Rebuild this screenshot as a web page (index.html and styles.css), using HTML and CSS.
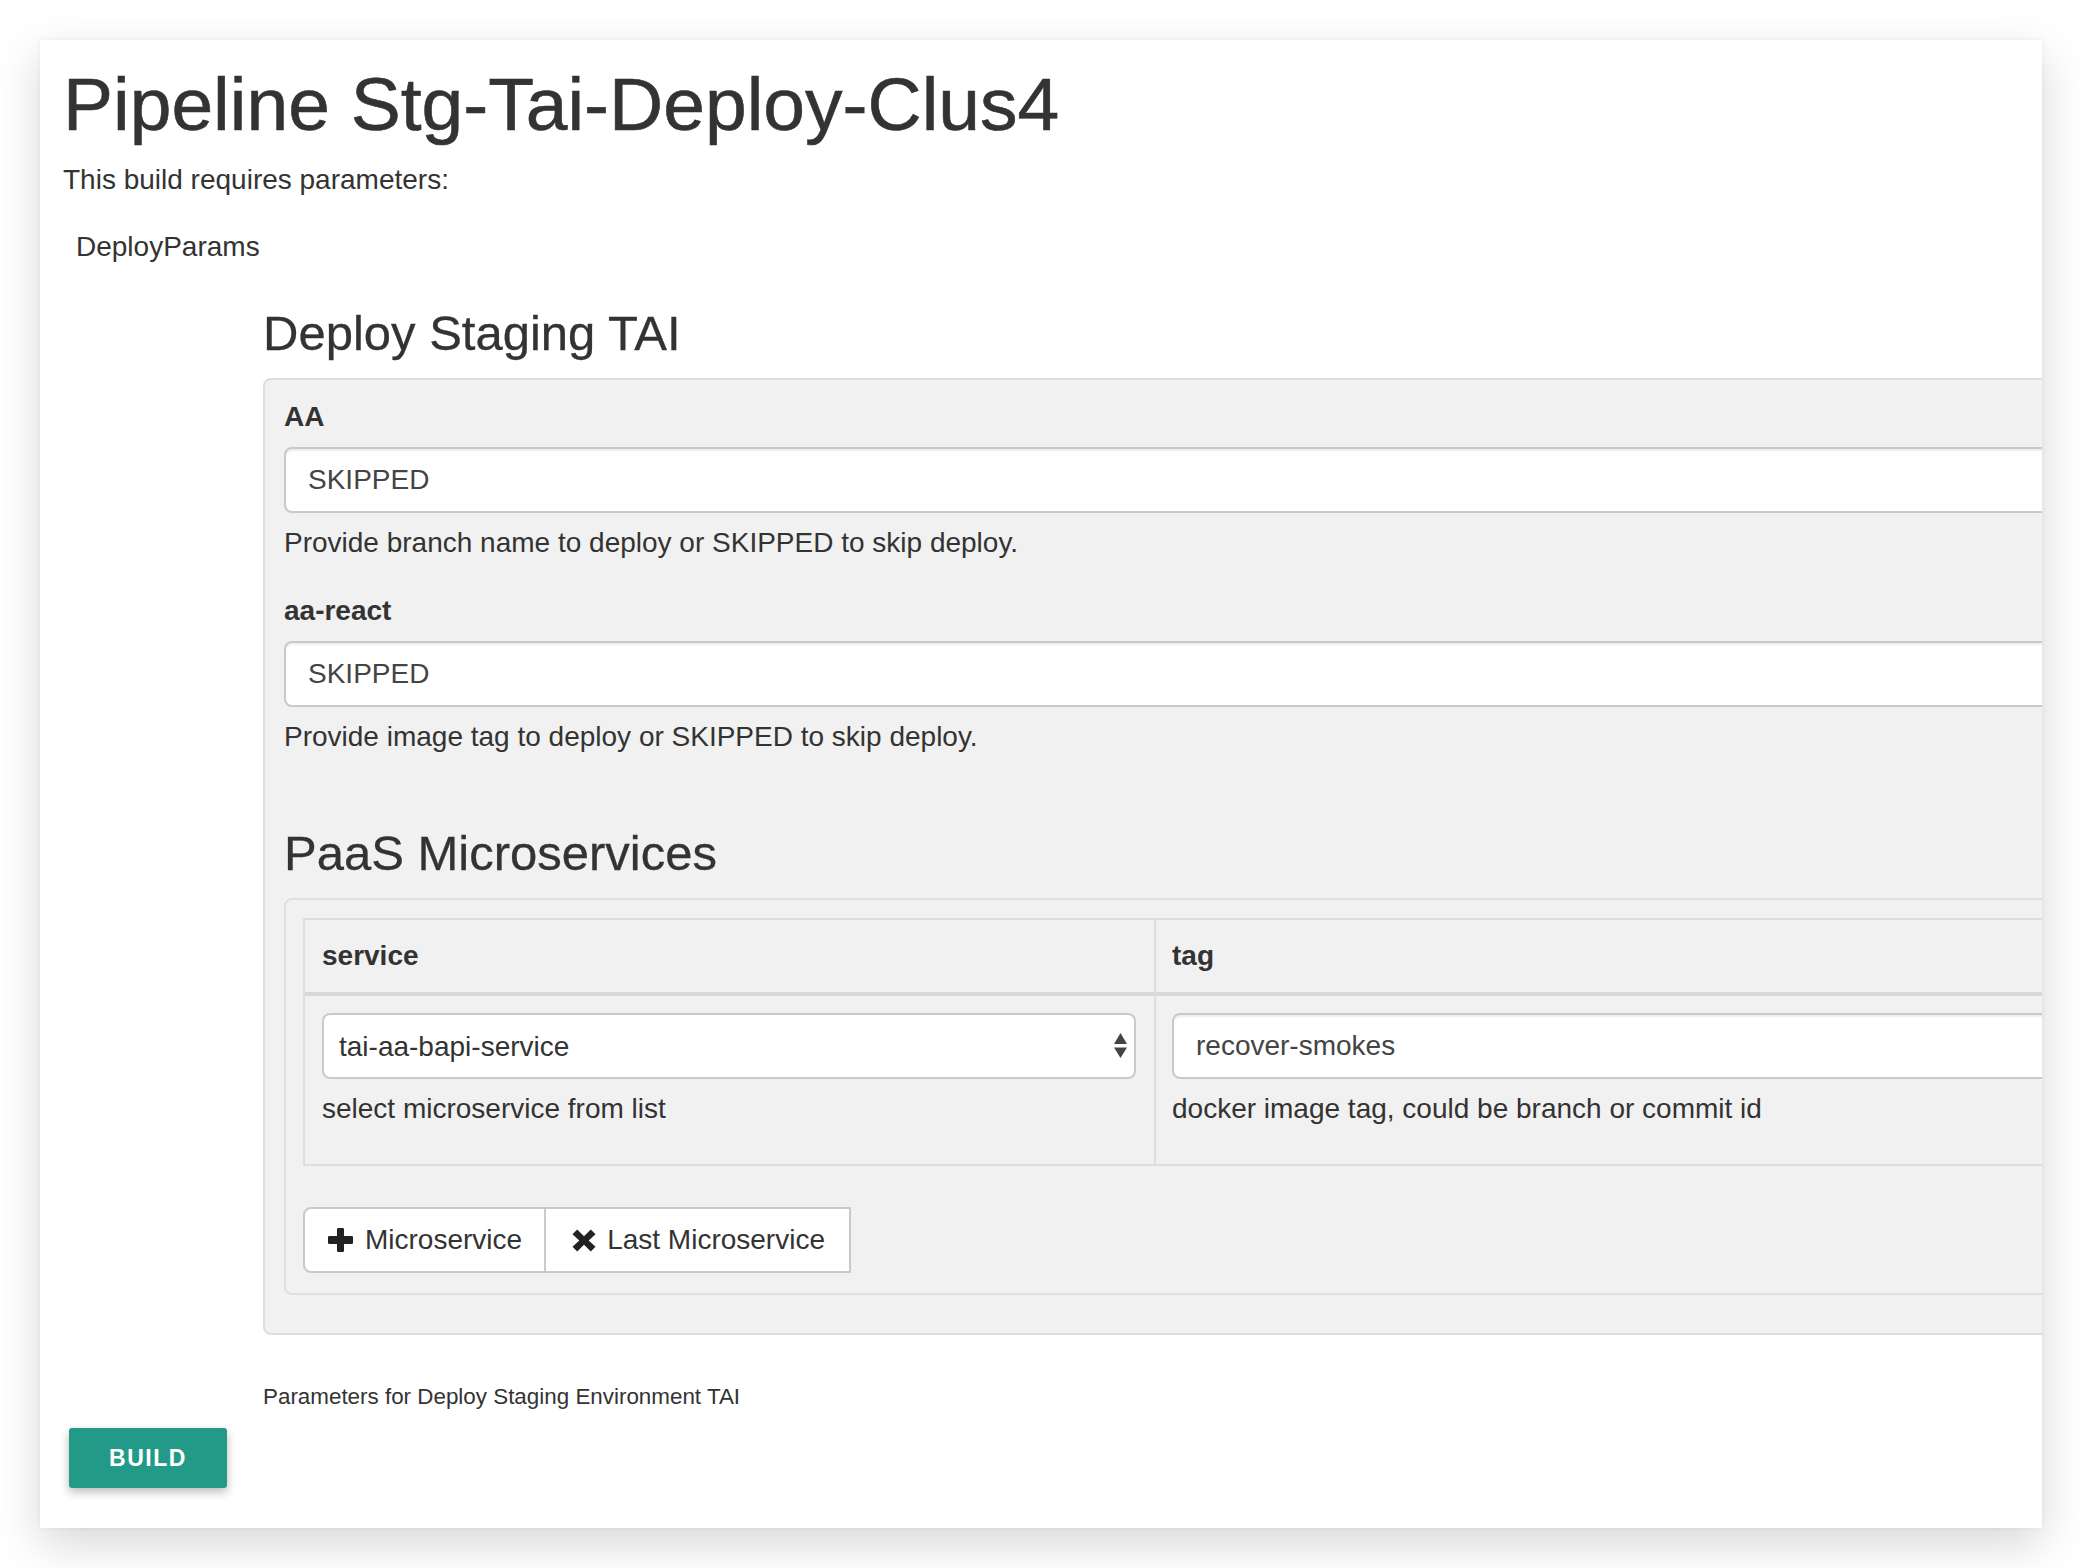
FILE: index.html
```html
<!DOCTYPE html>
<html lang="en">
<head>
<meta charset="utf-8">
<title>Pipeline Stg-Tai-Deploy-Clus4</title>
<link rel="stylesheet" href="styles.css">
</head>
<body>
<div class="window">
  <h1 class="title">Pipeline Stg-Tai-Deploy-Clus4</h1>
  <p class="intro">This build requires parameters:</p>

  <div class="param">
    <div class="param-name">DeployParams</div>
    <div class="param-main">
      <h2 class="section-title">Deploy Staging TAI</h2>
      <div class="well">
        <div class="field">
          <label class="field-label">AA</label>
          <input class="text-input" type="text" value="SKIPPED">
          <div class="help">Provide branch name to deploy or SKIPPED to skip deploy.</div>
        </div>
        <div class="field">
          <label class="field-label">aa-react</label>
          <input class="text-input" type="text" value="SKIPPED">
          <div class="help">Provide image tag to deploy or SKIPPED to skip deploy.</div>
        </div>

        <h3 class="section-title sub-title">PaaS Microservices</h3>
        <div class="inner-well">
          <div class="ms-table">
            <div class="th">service</div>
            <div class="th col2">tag</div>
            <div class="td">
              <div class="select-wrap">
                <select class="select-input">
                  <option>tai-aa-bapi-service</option>
                </select>
                <svg class="select-arrows" width="13" height="25" viewBox="0 0 13 25" aria-hidden="true">
                  <path d="M6.5 0L13 11H0z" fill="#444"/>
                  <path d="M0 14.5h13L6.5 25z" fill="#444"/>
                </svg>
              </div>
              <div class="help">select microservice from list</div>
            </div>
            <div class="td col2">
              <input class="text-input" type="text" value="recover-smokes">
              <div class="help">docker image tag, could be branch or commit id</div>
            </div>
          </div>

          <div class="btn-group">
            <button class="btn btn-first" type="button">
              <svg width="25" height="24" viewBox="0 0 25 24" aria-hidden="true">
                <path d="M9 1.2Q9 0 10.2 0h4.6Q16 0 16 1.2V8h7.8Q25 8 25 9.2v5.6Q25 16 23.8 16H16v6.8Q16 24 14.8 24h-4.6Q9 24 9 22.8V16H1.2Q0 16 0 14.8V9.2Q0 8 1.2 8H9z" fill="#222"/>
              </svg>
              <span>Microservice</span>
            </button>
            <button class="btn btn-last" type="button">
              <svg width="24" height="23" viewBox="0 0 24 23" aria-hidden="true">
                <path d="M5.2 0.5L12 7.3L18.8 0.5L23.5 5.2L16.7 11.5L23.5 17.8L18.8 22.5L12 15.7L5.2 22.5L0.5 17.8L7.3 11.5L0.5 5.2z" fill="#222"/>
              </svg>
              <span>Last Microservice</span>
            </button>
          </div>
        </div>
      </div>
    </div>
  </div>

  <div class="param-desc">Parameters for Deploy Staging Environment TAI</div>
  <button class="build" type="button">BUILD</button>
</div>
</body>
</html>
```

FILE: styles.css
```css
* {
  box-sizing: border-box;
}

html,
body {
  margin: 0;
  background: #ffffff;
}

body {
  font-family: "Liberation Sans", Arial, Helvetica, sans-serif;
  color: #333333;
}

.window {
  margin: 40px;
  width: 2002px;
  height: 1488px;
  background: #ffffff;
  overflow: hidden;
  padding: 24px 0 0 23px;
  box-shadow: 0 16px 44px rgba(0, 0, 0, 0.16), 0 0 6px rgba(0, 0, 0, 0.05);
}

.title {
  margin: 0;
  font-size: 75px;
  line-height: 80px;
  font-weight: 400;
  white-space: nowrap;
  -webkit-text-stroke: 0.6px #333333;
}

.intro {
  margin: 16px 0 0;
  font-size: 28px;
  line-height: 40px;
}

.param {
  display: grid;
  grid-template-columns: 200px 1900px;
  margin-top: 27px;
}

.param-name {
  padding-left: 13px;
  font-size: 28px;
  line-height: 40px;
}

.param-main {
  padding-top: 79px;
}

.section-title {
  margin: 0;
  font-size: 49px;
  line-height: 54px;
  font-weight: 400;
  white-space: nowrap;
  -webkit-text-stroke: 0.3px #333333;
}

.well {
  margin-top: 18px;
  background: #f1f1f1;
  border: 2px solid #dddddd;
  border-radius: 8px;
  padding: 17px 19px 38px;
}

.field + .field {
  margin-top: 28px;
}

.field-label {
  display: block;
  margin-bottom: 10px;
  font-size: 28px;
  line-height: 40px;
  font-weight: 700;
}

.text-input {
  display: block;
  width: 100%;
  height: 66px;
  margin: 0;
  padding: 0 22px;
  border: 2px solid #c9c9c9;
  border-radius: 8px;
  background: #ffffff;
  box-shadow: inset 0 2px 2px rgba(0, 0, 0, 0.07);
  font-family: "Liberation Sans", Arial, Helvetica, sans-serif;
  font-size: 28px;
  color: #444444;
  outline: none;
}

.help {
  margin-top: 10px;
  font-size: 28px;
  line-height: 40px;
  white-space: nowrap;
}

.sub-title {
  margin-top: 69px;
}

.inner-well {
  margin-top: 18px;
  background: #f1f1f1;
  border: 2px solid #dfdfdf;
  border-radius: 8px;
  padding: 18px 17px 20px;
}

.ms-table {
  display: grid;
  grid-template-columns: 849px 1fr;
  border: 2px solid #dddddd;
  margin-bottom: 41px;
}

.th {
  padding: 16px 17px;
  font-size: 28px;
  line-height: 40px;
  font-weight: 700;
  border-bottom: 4px solid #d8d8d8;
}

.td {
  padding: 17px 18px 35px 17px;
}

.col2 {
  border-left: 2px solid #dddddd;
  padding-left: 16px;
}

.select-wrap {
  position: relative;
}

.select-input {
  display: block;
  width: 100%;
  height: 66px;
  margin: 0;
  padding: 0 40px 0 15px;
  border: 2px solid #c9c9c9;
  border-radius: 8px;
  background: #ffffff;
  font-family: "Liberation Sans", Arial, Helvetica, sans-serif;
  font-size: 28px;
  color: #333333;
  appearance: none;
  -webkit-appearance: none;
  outline: none;
}

.select-arrows {
  position: absolute;
  right: 9px;
  top: 20px;
  pointer-events: none;
}

.btn-group {
  display: inline-flex;
}

.btn {
  display: flex;
  align-items: center;
  height: 66px;
  margin: 0;
  border: 2px solid #c9c9c9;
  background: #ffffff;
  font-family: "Liberation Sans", Arial, Helvetica, sans-serif;
  font-size: 28px;
  color: #333333;
  white-space: nowrap;
}

.btn-first {
  border-radius: 8px 0 0 8px;
  padding: 0 22px 0 23px;
  gap: 12px;
}

.btn-last {
  margin-left: -2px;
  border-radius: 0;
  padding: 0 24px 0 26px;
  gap: 11px;
}

.param-desc {
  margin: 46px 0 0 200px;
  font-size: 22.4px;
  line-height: 32px;
}

.build {
  display: block;
  margin: 15px 0 0 6px;
  width: 158px;
  height: 60px;
  padding: 0;
  border: none;
  border-radius: 3px;
  background: #239a87;
  color: #ffffff;
  font-family: "Liberation Sans", Arial, Helvetica, sans-serif;
  font-size: 23px;
  font-weight: 700;
  letter-spacing: 1.5px;
  box-shadow: 0 4px 10px rgba(0, 0, 0, 0.28);
}
```
